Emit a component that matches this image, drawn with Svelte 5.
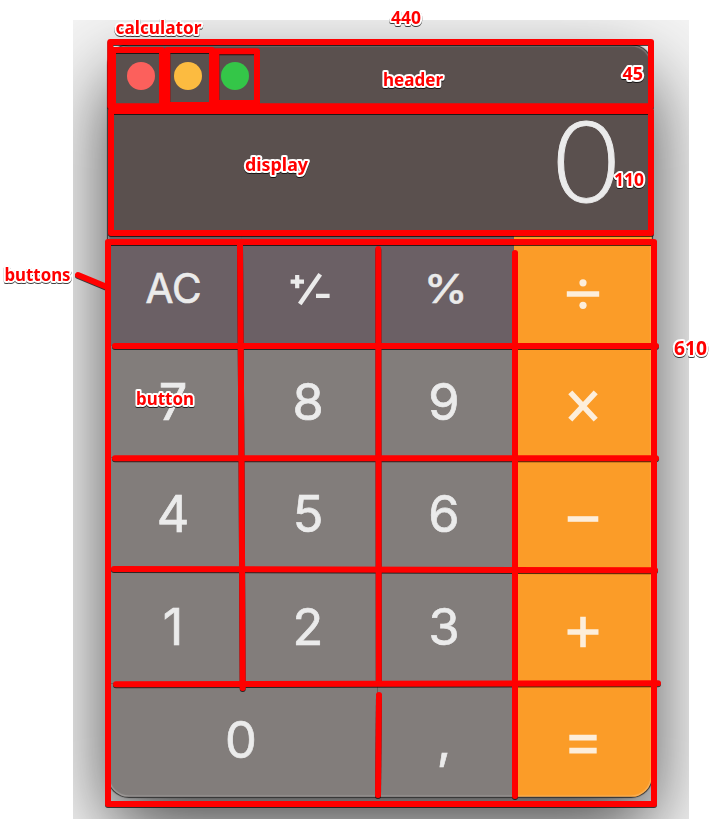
<script>
  const rows = [
    [{ t: 'AC', k: 'fn' }, { i: 'sign', k: 'fn' }, { t: '%', k: 'fn pct' }, { i: 'divide', k: 'op' }],
    [{ t: '7' }, { t: '8' }, { t: '9' }, { i: 'times', k: 'op low' }],
    [{ t: '4' }, { t: '5' }, { t: '6' }, { i: 'minus', k: 'op low' }],
    [{ t: '1' }, { t: '2' }, { t: '3' }, { i: 'plus', k: 'op low' }],
    [{ t: '0', k: 'wide' }, { t: ',' }, { i: 'equals', k: 'op' }]
  ];
  const buttons = rows.flat();

  const icons = {
    sign: 'M-18.4 -7.4h13.4M-11.8 -14.1v13.4M7 6.8h13.6',
    divide: 'M-16.2 0h32.4',
    times: 'M-12.7 -13.7L12.7 13.7M12.7 -13.7L-12.7 13.7',
    minus: 'M-15.3 0h30.6',
    plus: 'M-15.5 0h31M0 -15.3v30.6',
    equals: 'M-13.7 -6.4h27.4M-13.7 6.6h27.4'
  };

  const strokes = [
    'M110.3 42H651V106.3H110.3Z',
    'M111 111H651V233H111Z',
    'M113 50H162V107H113Z',
    'M167.3 50H212V105H167.3Z',
    'M216.3 51.3H257V103H216.3Z',
    'M108 242H654V804H108Z',
    'M115 346H656',
    'M115 458.3H656',
    'M114 569L655 570.3',
    'M116 684.3L658 683.3',
    'M240 245L241.5 458L242.7 688',
    'M378.3 249L378.8 682',
    'M379 695L378 795',
    'M515 253V796',
    'M78 275L107 287'
  ];

  const labels = [
    { t: 'calculator', x: 115.5, y: 34, w: 86 },
    { t: '440', x: 391, y: 24, w: 30 },
    { t: 'header', x: 383, y: 86, w: 60 },
    { t: '45', x: 622.5, y: 80, w: 20.5 },
    { t: 'display', x: 245, y: 171, w: 63 },
    { t: '110', x: 614, y: 186, w: 30 },
    { t: 'buttons', x: 4.5, y: 281, w: 66 },
    { t: 'button', x: 136, y: 405, w: 58 },
    { t: '610', x: 674, y: 355, w: 33, s: 19 }
  ];
</script>

<main class="board">
  <section class="backdrop">
    <div class="calculator">
      <header class="header">
        <i class="dot close"></i>
        <i class="dot minimize"></i>
        <i class="dot zoom"></i>
      </header>
      <div class="display"><span class="value">0</span></div>
      <div class="buttons">
        {#each buttons as b}
          <button class="key {b.k ?? ''}">
            {#if b.i}
              <svg class="icon" viewBox="-22 -22 44 44" width="44" height="44">
                <path d={icons[b.i]} class:thin={b.i === 'sign'} />
                {#if b.i === 'sign'}
                  <path class="slash" d="M-9.2 15L11.2 -14.8" />
                {/if}
                {#if b.i === 'divide'}
                  <circle cx="0" cy="-11.2" r="3.6" />
                  <circle cx="0" cy="11.3" r="3.6" />
                {/if}
              </svg>
            {:else}
              <span class="glyph">{b.t}</span>
            {/if}
          </button>
        {/each}
      </div>
    </div>
  </section>

  <svg class="notes" viewBox="0 0 715 819" width="715" height="819">
    <g class="lines">
      {#each strokes as d}<path {d} />{/each}
    </g>
    <g class="labels">
      {#each labels as l}
        <text x={l.x} y={l.y} textLength={l.w} lengthAdjust="spacingAndGlyphs" font-size={l.s ?? 18}>{l.t}</text>
      {/each}
    </g>
  </svg>
</main>

<style>
  :global(body) { margin: 0; background: #fff; }
  .board {
    position: relative;
    box-sizing: border-box;
    width: 715px;
    height: 819px;
    padding: 20px 26px 0 73px;
    overflow: hidden;
    background: #fff;
  }
  .backdrop {
    box-sizing: border-box;
    height: 799px;
    padding: 25px 37px 0 35px;
    overflow: hidden;
    background: #f4f4f4;
  }
  .calculator {
    position: relative;
    box-sizing: border-box;
    width: 544px;
    height: 752px;
    border-radius: 21px;
    overflow: hidden;
    background: #5a504e;
    box-shadow: 0 0 1px 1px #333, 0 32px 80px rgba(0, 0, 0, 0.72);
    font-family: Inter, "Liberation Sans", sans-serif;
    color: #ebebeb;
  }
  .calculator::after {
    content: "";
    position: absolute;
    inset: 0;
    border-radius: 21px;
    box-shadow: inset 0 0 1px 1.5px rgba(255, 255, 255, 0.22);
    pointer-events: none;
  }
  .header {
    display: flex;
    gap: 18.5px;
    box-sizing: border-box;
    height: 65px;
    padding: 16.5px 0 0 18.5px;
  }
  .dot { width: 28.5px; height: 28.5px; border-radius: 50%; }
  .close { background: #fc605c; }
  .minimize { background: #fcbb40; }
  .zoom { background: #34c648; }
  .display {
    box-sizing: border-box;
    height: 126px;
    padding-right: 33px;
    text-align: right;
    font-size: 110px;
    font-weight: 200;
    line-height: 105px;
  }
  .value {
    display: inline-block;
    transform: scaleX(1.09);
    -webkit-text-stroke: 0.9px #ebebeb;
  }
  .buttons {
    display: grid;
    grid-template-columns: 134px 136px 136px 138px;
    grid-template-rows: 110px 112px 113px 113px 113px;
  }
  .key {
    display: flex;
    align-items: center;
    justify-content: center;
    box-sizing: border-box;
    margin: 0;
    padding: 1px 3px 0 0;
    border: 0;
    border-right: 1px solid #656160;
    border-bottom: 1px solid #656160;
    background: #827d7b;
    color: inherit;
    font-family: inherit;
    font-size: 50.5px;
    font-weight: 400;
    line-height: 1;
    -webkit-text-stroke: 0.7px #ebebeb;
  }
  .fn { background: #6b6065; font-size: 40.5px; padding: 0 2px 3px 0; }
  .pct { font-size: 40px; }
  .pct .glyph { transform: translateX(1px) scaleX(1.12); }
  .op { background: #fb9c28; border-color: #c47a20; padding: 7px 0 0; }
  .low { padding-top: 9px; }
  .wide { grid-column: span 2; }
  .icon { overflow: visible; fill: #fdeedb; }
  .icon path { fill: none; stroke: #fdeedb; stroke-width: 5.6; }
  .icon path.thin { stroke: #ebebeb; stroke-width: 4.2; }
  .icon path.slash { stroke: #ebebeb; stroke-width: 4.4; }
  .notes { position: absolute; left: 0; top: 0; }
  .lines path {
    fill: none;
    stroke: #f00;
    stroke-width: 6;
    stroke-linecap: round;
    stroke-linejoin: round;
  }
  .lines { filter: drop-shadow(0 1px 0.5px rgba(0, 0, 0, 0.7)); }
  .labels {
    font-family: "Noto Sans", "Open Sans", sans-serif;
    font-weight: 700;
    fill: #f00;
    stroke: #fff;
    stroke-width: 4px;
    stroke-linejoin: round;
    paint-order: stroke;
    filter: drop-shadow(0 1px 0.6px rgba(0, 0, 0, 0.75));
  }
</style>
